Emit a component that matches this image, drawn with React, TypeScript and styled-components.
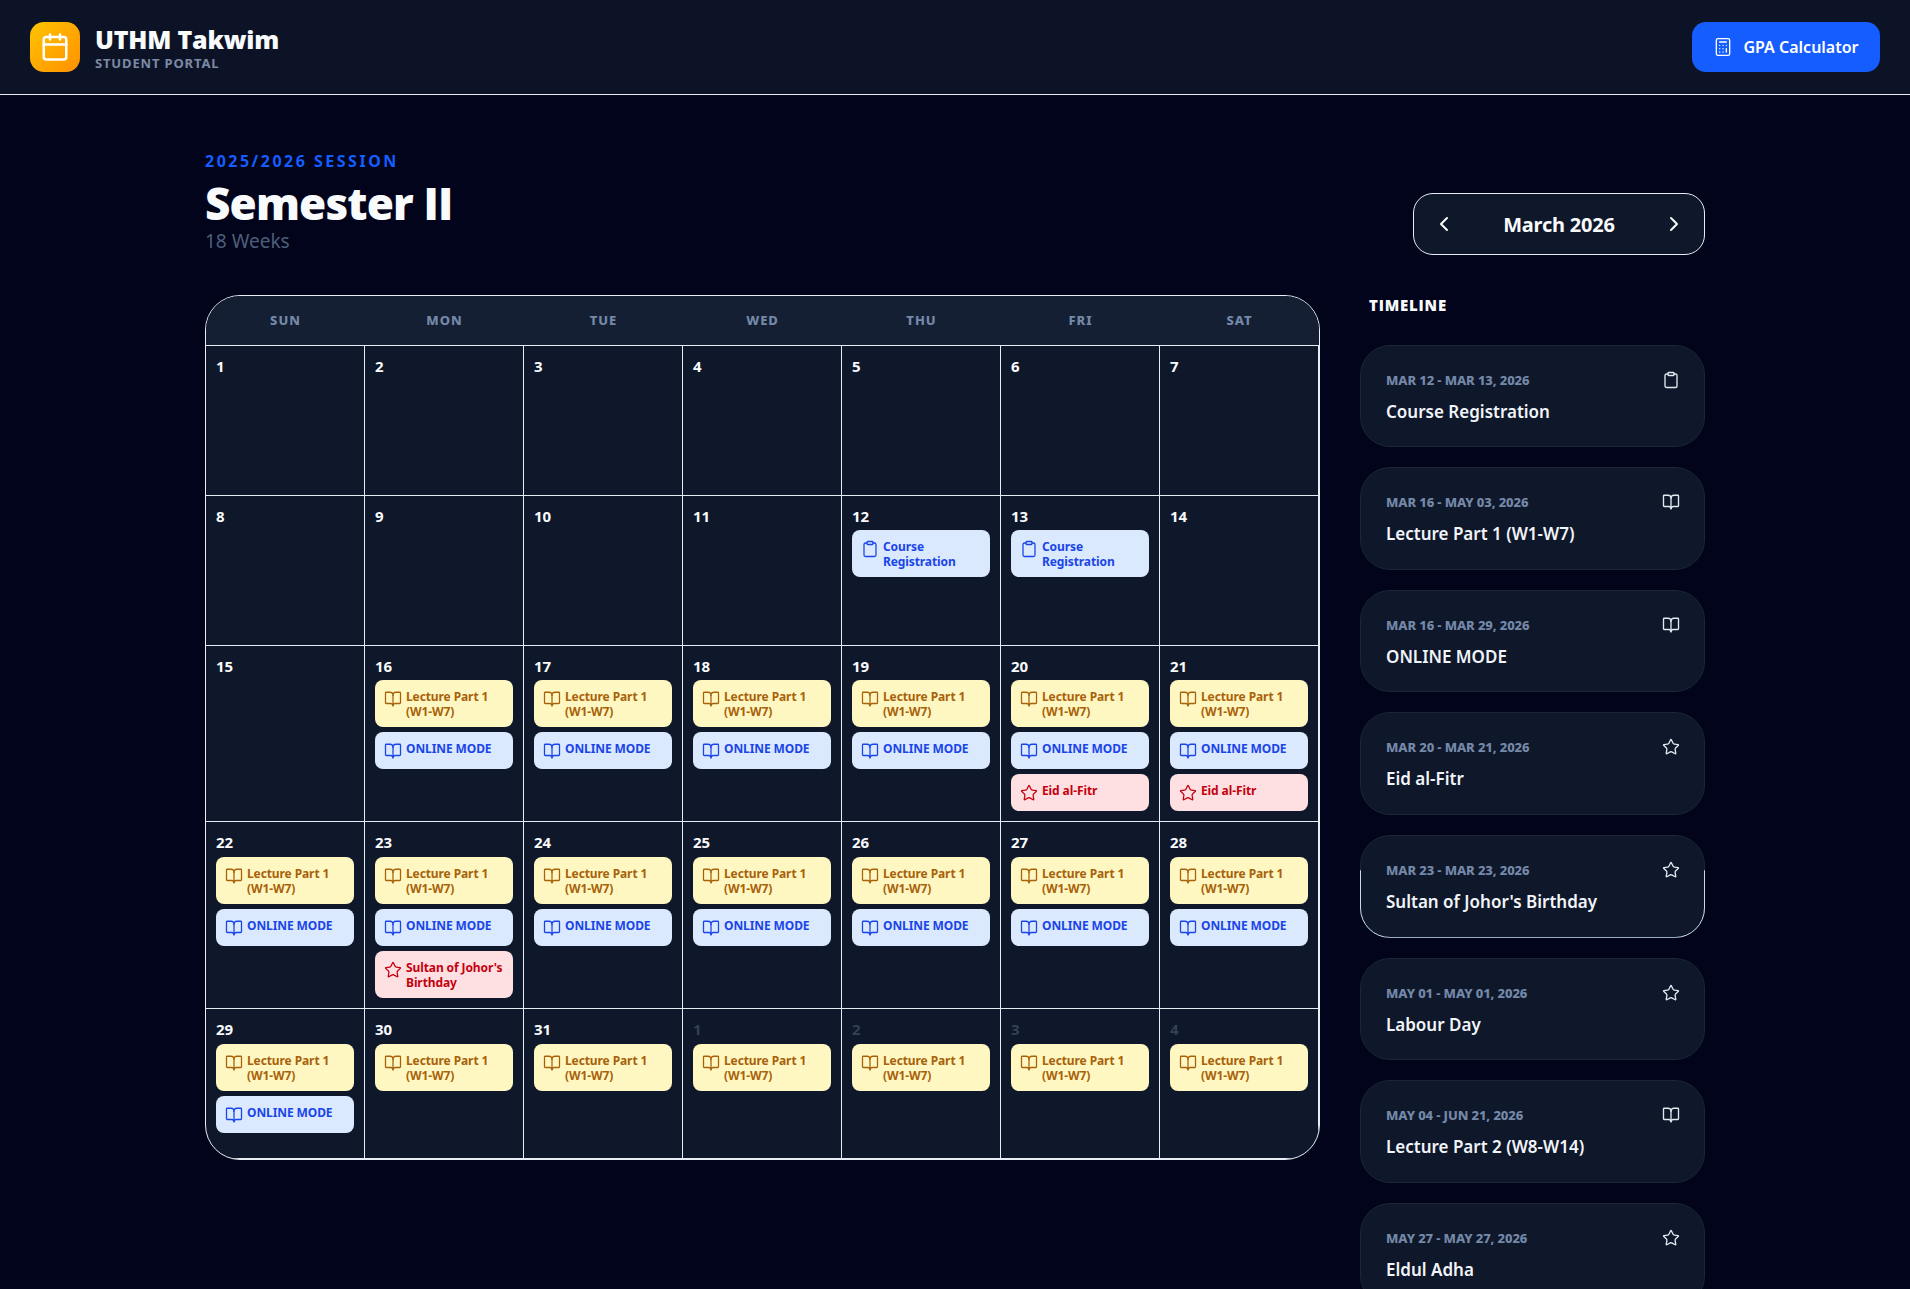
import React from "react";
import styled, { createGlobalStyle } from "styled-components";
import {
  BookOpen,
  Calculator,
  Calendar,
  ChevronLeft,
  ChevronRight,
  Clipboard,
  Star,
} from "lucide-react";

const HEAVY = `"Open Sans", "Noto Sans", sans-serif`;

const GlobalStyle = createGlobalStyle`
  html, body {
    margin: 0;
    padding: 0;
    height: 100%;
    background: #01041a;
    overflow: hidden;
  }
  * { box-sizing: border-box; }
  body {
    font-family: "Noto Sans", "Open Sans", sans-serif;
    color: #f8fafc;
  }
`;

const Page = styled.div`
  height: 100vh;
  overflow: hidden;
  background: #01041a;
`;

const TopBar = styled.header`
  height: 95px;
  padding: 22px 30px;
  display: flex;
  align-items: center;
  justify-content: space-between;
  background: #0d1326;
  border-bottom: 1px solid #e8edf5;
`;

const Brand = styled.div`
  display: flex;
  align-items: center;
  gap: 15px;
`;

const LogoBox = styled.div`
  width: 50px;
  height: 50px;
  border-radius: 14px;
  display: flex;
  align-items: center;
  justify-content: center;
  color: #fff;
  background: linear-gradient(135deg, #ffc400, #ff9000);
`;

const BrandText = styled.div`
  display: flex;
  flex-direction: column;
  padding-top: 2px;
`;

const BrandName = styled.div`
  font-family: ${HEAVY};
  font-size: 25px;
  font-weight: 800;
  line-height: 30px;
  letter-spacing: -0.2px;
  color: #f8fafc;
`;

const BrandSub = styled.div`
  font-size: 13px;
  font-weight: 700;
  line-height: 18px;
  letter-spacing: 0.85px;
  color: #7c8aa5;
`;

const GpaButton = styled.button`
  width: 188px;
  height: 50px;
  border: none;
  border-radius: 14px;
  display: flex;
  align-items: center;
  justify-content: center;
  gap: 10px;
  background: #165dff;
  color: #fff;
  font-family: inherit;
  font-size: 16px;
  font-weight: 600;
`;

const Main = styled.main`
  width: 1500px;
  margin: 0 auto;
  padding-top: 55px;
`;

const PageHead = styled.div`
  height: 145px;
  display: flex;
  align-items: flex-start;
  justify-content: space-between;
`;

const Session = styled.div`
  font-size: 16px;
  font-weight: 700;
  line-height: 22px;
  letter-spacing: 2.5px;
  color: #165dff;
`;

const Title = styled.h1`
  margin: 5px 0 0;
  font-family: ${HEAVY};
  font-size: 44px;
  font-weight: 800;
  line-height: 52px;
  letter-spacing: -0.85px;
  color: #f8fafc;
`;

const Weeks = styled.div`
  font-size: 19px;
  line-height: 24px;
  color: #4d5f7a;
`;

const MonthNav = styled.div`
  width: 292px;
  height: 62px;
  margin-top: 43px;
  padding: 0 18px;
  display: flex;
  align-items: center;
  justify-content: space-between;
  border: 1px solid #e8edf5;
  border-radius: 20px;
  background: #0f172a;
`;

const MonthLabel = styled.div`
  font-size: 20px;
  font-weight: 700;
  letter-spacing: -0.2px;
  color: #f8fafc;
`;

const Columns = styled.div`
  display: grid;
  grid-template-columns: 1115px 345px;
  column-gap: 40px;
  align-items: start;
`;

const CalendarBox = styled.div`
  border: 1px solid #e8edf5;
  border-radius: 35px;
  overflow: hidden;
  background: #0f172a;
`;

const WeekHead = styled.div`
  display: grid;
  grid-template-columns: repeat(7, 1fr);
  height: 50px;
  padding-bottom: 2px;
  background: #141f33;
  border-bottom: 1px solid #e8edf5;
`;

const WeekDay = styled.div`
  display: flex;
  align-items: center;
  justify-content: center;
  font-size: 13px;
  font-weight: 800;
  letter-spacing: 1px;
  color: #7488a8;
`;

const DayGrid = styled.div`
  display: grid;
  grid-template-columns: repeat(7, 1fr);
  grid-template-rows: auto auto auto 186.9px auto;
`;

const DayCell = styled.div`
  min-height: 150px;
  padding: 10px 10px 10px 9px;
  display: flex;
  flex-direction: column;
  gap: 5px;
  border-right: 1px solid #e8edf5;
  border-bottom: 1px solid #e8edf5;
`;

const DayNumber = styled.div<{ $muted?: boolean }>`
  height: 19.45px;
  padding-left: 1px;
  font-size: 15px;
  font-weight: 700;
  line-height: 20px;
  color: ${(p) => (p.$muted ? "#334155" : "#f8fafc")};
`;

const kinds = {
  yellow: { bg: "#fff7c2", fg: "#a8620a" },
  blue: { bg: "#dbe9fe", fg: "#1a45e8" },
  red: { bg: "#fee0e2", fg: "#c4000f" },
};

type Kind = keyof typeof kinds;

const EventChip = styled.div<{ $kind: Kind }>`
  margin-left: 1px;
  padding: 9px 6px 8px 9px;
  display: flex;
  align-items: flex-start;
  gap: 4px;
  border-radius: 8px;
  font-size: 12px;
  font-weight: 700;
  line-height: 15px;
  letter-spacing: -0.1px;
  background: ${(p) => kinds[p.$kind].bg};
  color: ${(p) => kinds[p.$kind].fg};
`;

const ChipIcon = styled.span`
  flex: none;
  height: 20px;
  padding-top: 1px;
  display: block;
  svg { display: block; }
`;

const Sidebar = styled.aside`
  display: flex;
  flex-direction: column;
  gap: 20px;
`;

const SideHead = styled.div`
  height: 29.5px;
  padding-left: 9px;
  font-family: ${HEAVY};
  font-size: 15px;
  font-weight: 800;
  line-height: 20px;
  letter-spacing: 0.8px;
  color: #f8fafc;
`;

const TimelineCard = styled.div<{ $hover?: boolean }>`
  position: relative;
  height: 102.67px;
  flex: none;
  padding: 24px 24px 0 25px;
  border: 1px solid #1b2638;
  border-radius: 30px;
  background: #0f172a;
  ${(p) =>
    p.$hover &&
    `&::after {
      content: "";
      position: absolute;
      inset: -1px;
      border: 1px solid #c8d8f0;
      border-radius: 30px;
      clip-path: inset(35px 0 0 0);
    }`}
`;

const CardTop = styled.div`
  height: 20px;
  display: flex;
  align-items: center;
  justify-content: space-between;
  color: #e2e8f0;
`;

const CardDate = styled.div`
  font-size: 13px;
  font-weight: 800;
  letter-spacing: -0.1px;
  color: #7488a8;
`;

const CardTitle = styled.div`
  margin-top: 10px;
  font-size: 17px;
  font-weight: 600;
  line-height: 23px;
  color: #f1f5f9;
`;

const icons = { book: BookOpen, clip: Clipboard, star: Star };
type IconName = keyof typeof icons;

const LECTURE = { label: "Lecture Part 1 (W1-W7)", kind: "yellow", icon: "book" } as const;
const ONLINE = { label: "ONLINE MODE", kind: "blue", icon: "book" } as const;
const COURSE = { label: "Course Registration", kind: "blue", icon: "clip" } as const;
const EID = { label: "Eid al-Fitr", kind: "red", icon: "star" } as const;
const SULTAN = { label: "Sultan of Johor's Birthday", kind: "red", icon: "star" } as const;

type CalEvent = { label: string; kind: Kind; icon: IconName };
type Day = { n: number; muted?: boolean; events: CalEvent[] };

const buildDays = (): Day[] => {
  const days: Day[] = [];
  for (let n = 1; n <= 31; n++) {
    const events: CalEvent[] = [];
    if (n === 12 || n === 13) events.push(COURSE);
    if (n >= 16) events.push(LECTURE);
    if (n >= 16 && n <= 29) events.push(ONLINE);
    if (n === 20 || n === 21) events.push(EID);
    if (n === 23) events.push(SULTAN);
    days.push({ n, events });
  }
  for (let n = 1; n <= 4; n++) days.push({ n, muted: true, events: [LECTURE] });
  return days;
};

const timeline: { date: string; title: string; icon: IconName; hover?: boolean }[] = [
  { date: "MAR 12 - MAR 13, 2026", title: "Course Registration", icon: "clip" },
  { date: "MAR 16 - MAY 03, 2026", title: "Lecture Part 1 (W1-W7)", icon: "book" },
  { date: "MAR 16 - MAR 29, 2026", title: "ONLINE MODE", icon: "book" },
  { date: "MAR 20 - MAR 21, 2026", title: "Eid al-Fitr", icon: "star" },
  { date: "MAR 23 - MAR 23, 2026", title: "Sultan of Johor's Birthday", icon: "star", hover: true },
  { date: "MAY 01 - MAY 01, 2026", title: "Labour Day", icon: "star" },
  { date: "MAY 04 - JUN 21, 2026", title: "Lecture Part 2 (W8-W14)", icon: "book" },
  { date: "MAY 27 - MAY 27, 2026", title: "Eldul Adha", icon: "star" },
];

const weekDays = ["SUN", "MON", "TUE", "WED", "THU", "FRI", "SAT"];

export default function App() {
  return (
    <Page>
      <GlobalStyle />
      <TopBar>
        <Brand>
          <LogoBox>
            <Calendar size={30} strokeWidth={2} />
          </LogoBox>
          <BrandText>
            <BrandName>UTHM Takwim</BrandName>
            <BrandSub>STUDENT PORTAL</BrandSub>
          </BrandText>
        </Brand>
        <GpaButton>
          <Calculator size={20} strokeWidth={1.6} />
          GPA Calculator
        </GpaButton>
      </TopBar>

      <Main>
        <PageHead>
          <div>
            <Session>2025/2026 SESSION</Session>
            <Title>Semester II</Title>
            <Weeks>18 Weeks</Weeks>
          </div>
          <MonthNav>
            <ChevronLeft size={24} />
            <MonthLabel>March 2026</MonthLabel>
            <ChevronRight size={24} />
          </MonthNav>
        </PageHead>

        <Columns>
          <CalendarBox>
            <WeekHead>
              {weekDays.map((d) => (
                <WeekDay key={d}>{d}</WeekDay>
              ))}
            </WeekHead>
            <DayGrid>
              {buildDays().map((day, i) => (
                <DayCell key={i}>
                  <DayNumber $muted={day.muted}>{day.n}</DayNumber>
                  {day.events.map((ev) => {
                    const Icon = icons[ev.icon];
                    return (
                      <EventChip key={ev.label} $kind={ev.kind}>
                        <ChipIcon>
                          <Icon size={18} strokeWidth={1.7} />
                        </ChipIcon>
                        <span>{ev.label}</span>
                      </EventChip>
                    );
                  })}
                </DayCell>
              ))}
            </DayGrid>
          </CalendarBox>

          <Sidebar>
            <SideHead>TIMELINE</SideHead>
            {timeline.map((t) => {
              const Icon = icons[t.icon];
              return (
                <TimelineCard key={t.title} $hover={t.hover}>
                  <CardTop>
                    <CardDate>{t.date}</CardDate>
                    <Icon size={18} strokeWidth={1.8} />
                  </CardTop>
                  <CardTitle>{t.title}</CardTitle>
                </TimelineCard>
              );
            })}
          </Sidebar>
        </Columns>
      </Main>
    </Page>
  );
}
